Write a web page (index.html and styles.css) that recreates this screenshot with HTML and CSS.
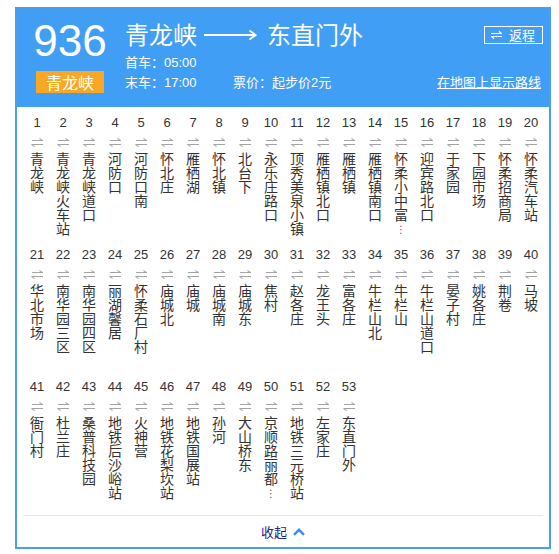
FILE: index.html
```html
<!DOCTYPE html>
<html lang="zh-CN">
<head>
<meta charset="utf-8">
<title>936</title>
<link rel="stylesheet" href="styles.css">
</head>
<body>
<div class="card">
  <div class="head">
    <div class="line-no">
      <div class="num">936</div>
      <div class="badge">青龙峡</div>
    </div>
    <div class="info">
      <div class="top">
        <div class="title">
          <span>青龙峡</span>
          <svg class="long-arrow" width="53" height="12" viewBox="0 0 53 12"><path d="M0 6H51" stroke="#fff" stroke-width="2" fill="none"/><path d="M45.5 1.5L51.5 6L45.5 10.5" stroke="#fff" stroke-width="2" fill="none"/></svg>
          <span>东直门外</span>
        </div>
        <a class="back"><svg width="11" height="8" viewBox="0 0 11 8"><path d="M0 2.5H10.5L8 0.3" stroke="#fff" stroke-width="1.2" fill="none"/><path d="M11 5.5H0.5L3 7.7" stroke="#fff" stroke-width="1.2" fill="none"/></svg><span>返程</span></a>
      </div>
      <div class="time">首车：05:00</div>
      <div class="bottom">
        <span class="time-last">末车：17:00</span>
        <span class="price">票价：起步价2元</span>
        <a class="maplink">在地图上显示路线</a>
      </div>
    </div>
  </div>

  <div class="stations">
    <div class="st"><div class="no">1</div><i class="dir"></i><div class="name">青龙峡</div></div>
    <div class="st"><div class="no">2</div><i class="dir"></i><div class="name">青龙峡火车站</div></div>
    <div class="st"><div class="no">3</div><i class="dir"></i><div class="name">青龙峡道口</div></div>
    <div class="st"><div class="no">4</div><i class="dir"></i><div class="name">河防口</div></div>
    <div class="st"><div class="no">5</div><i class="dir"></i><div class="name">河防口南</div></div>
    <div class="st"><div class="no">6</div><i class="dir"></i><div class="name">怀北庄</div></div>
    <div class="st"><div class="no">7</div><i class="dir"></i><div class="name">雁栖湖</div></div>
    <div class="st"><div class="no">8</div><i class="dir"></i><div class="name">怀北镇</div></div>
    <div class="st"><div class="no">9</div><i class="dir"></i><div class="name">北台下</div></div>
    <div class="st"><div class="no">10</div><i class="dir"></i><div class="name">永乐庄路口</div></div>
    <div class="st"><div class="no">11</div><i class="dir"></i><div class="name">顶秀美泉小镇</div></div>
    <div class="st"><div class="no">12</div><i class="dir"></i><div class="name">雁栖镇北口</div></div>
    <div class="st"><div class="no">13</div><i class="dir"></i><div class="name">雁栖镇</div></div>
    <div class="st"><div class="no">14</div><i class="dir"></i><div class="name">雁栖镇南口</div></div>
    <div class="st"><div class="no">15</div><i class="dir"></i><div class="name">怀柔小中富</div><div class="more">⋮</div></div>
    <div class="st"><div class="no">16</div><i class="dir"></i><div class="name">迎宾路北口</div></div>
    <div class="st"><div class="no">17</div><i class="dir"></i><div class="name">于家园</div></div>
    <div class="st"><div class="no">18</div><i class="dir"></i><div class="name">下园市场</div></div>
    <div class="st"><div class="no">19</div><i class="dir"></i><div class="name">怀柔招商局</div></div>
    <div class="st"><div class="no">20</div><i class="dir"></i><div class="name">怀柔汽车站</div></div>
    <div class="st"><div class="no">21</div><i class="dir"></i><div class="name">华北市场</div></div>
    <div class="st"><div class="no">22</div><i class="dir"></i><div class="name">南华园三区</div></div>
    <div class="st"><div class="no">23</div><i class="dir"></i><div class="name">南华园四区</div></div>
    <div class="st"><div class="no">24</div><i class="dir"></i><div class="name">丽湖馨居</div></div>
    <div class="st"><div class="no">25</div><i class="dir"></i><div class="name">怀柔石厂村</div></div>
    <div class="st"><div class="no">26</div><i class="dir"></i><div class="name">庙城北</div></div>
    <div class="st"><div class="no">27</div><i class="dir"></i><div class="name">庙城</div></div>
    <div class="st"><div class="no">28</div><i class="dir"></i><div class="name">庙城南</div></div>
    <div class="st"><div class="no">29</div><i class="dir"></i><div class="name">庙城东</div></div>
    <div class="st"><div class="no">30</div><i class="dir"></i><div class="name">焦村</div></div>
    <div class="st"><div class="no">31</div><i class="dir"></i><div class="name">赵各庄</div></div>
    <div class="st"><div class="no">32</div><i class="dir"></i><div class="name">龙王头</div></div>
    <div class="st"><div class="no">33</div><i class="dir"></i><div class="name">富各庄</div></div>
    <div class="st"><div class="no">34</div><i class="dir"></i><div class="name">牛栏山北</div></div>
    <div class="st"><div class="no">35</div><i class="dir"></i><div class="name">牛栏山</div></div>
    <div class="st"><div class="no">36</div><i class="dir"></i><div class="name">牛栏山道口</div></div>
    <div class="st"><div class="no">37</div><i class="dir"></i><div class="name">晏子村</div></div>
    <div class="st"><div class="no">38</div><i class="dir"></i><div class="name">姚各庄</div></div>
    <div class="st"><div class="no">39</div><i class="dir"></i><div class="name">荆卷</div></div>
    <div class="st"><div class="no">40</div><i class="dir"></i><div class="name">马坡</div></div>
    <div class="st"><div class="no">41</div><i class="dir"></i><div class="name">衙门村</div></div>
    <div class="st"><div class="no">42</div><i class="dir"></i><div class="name">杜兰庄</div></div>
    <div class="st"><div class="no">43</div><i class="dir"></i><div class="name">桑普科技园</div></div>
    <div class="st"><div class="no">44</div><i class="dir"></i><div class="name">地铁后沙峪站</div></div>
    <div class="st"><div class="no">45</div><i class="dir"></i><div class="name">火神营</div></div>
    <div class="st"><div class="no">46</div><i class="dir"></i><div class="name">地铁花梨坎站</div></div>
    <div class="st"><div class="no">47</div><i class="dir"></i><div class="name">地铁国展站</div></div>
    <div class="st"><div class="no">48</div><i class="dir"></i><div class="name">孙河</div></div>
    <div class="st"><div class="no">49</div><i class="dir"></i><div class="name">大山桥东</div></div>
    <div class="st"><div class="no">50</div><i class="dir"></i><div class="name">京顺路丽都</div><div class="more">⋮</div></div>
    <div class="st"><div class="no">51</div><i class="dir"></i><div class="name">地铁三元桥站</div></div>
    <div class="st"><div class="no">52</div><i class="dir"></i><div class="name">左家庄</div></div>
    <div class="st"><div class="no">53</div><i class="dir"></i><div class="name">东直门外</div></div>
  </div>

  <div class="foot">
    <a class="collapse">收起</a>
    <svg width="12" height="8" viewBox="0 0 12 8"><path d="M1 6.8L6 1.8L11 6.8" stroke="#3b8fe3" stroke-width="2.4" fill="none"/></svg>
  </div>
</div>
</body>
</html>
```

FILE: styles.css
```css
* { box-sizing: border-box; }

body {
  margin: 0;
  background: #fff;
  font-family: "Liberation Sans", "Noto Sans CJK SC", sans-serif;
  color: #333;
}

.card {
  margin: 7px 0 0 15px;
  width: 536px;
  border: 2px solid #4a9fea;
  background: #fff;
}

/* header */
.head {
  height: 98px;
  background: #419ef5;
  color: #fff;
  display: flex;
  padding: 10px 6px 0 16px;
}

.line-no {
  width: 74px;
  display: flex;
  flex-direction: column;
  align-items: center;
}

.num {
  font-size: 44px;
  line-height: 44px;
  font-family: "Liberation Sans", sans-serif;
}

.badge {
  margin-top: 8px;
  width: 68px;
  height: 22px;
  background: #f8a824;
  font-family: "Noto Sans CJK SC", sans-serif;
  font-size: 16px;
  line-height: 22px;
  text-align: center;
}

.info {
  flex: 1;
  margin-left: 18px;
  display: flex;
  flex-direction: column;
  font-size: 13px;
}

.top {
  display: flex;
  justify-content: space-between;
  align-items: flex-start;
}

.title {
  display: flex;
  align-items: center;
  font-family: "Noto Sans CJK SC", sans-serif;
  font-size: 24px;
  line-height: 30px;
}

.long-arrow { margin: 1px 10px 0 7px; }

.back {
  margin-top: 7px;
  height: 18px;
  border: 1px solid #fff;
  padding: 0 7px 0 6px;
  display: flex;
  align-items: center;
  gap: 7px;
  font-family: "Noto Sans CJK SC", sans-serif;
  font-size: 13px;
  line-height: 16px;
  color: #fff;
}

.time {
  margin-top: 4px;
  line-height: 20px;
}

.bottom {
  display: flex;
  line-height: 20px;
}

.time-last { width: 108px; }

.maplink {
  margin-left: auto;
  margin-right: 2px;
  color: #fff;
  text-decoration: underline;
}

/* stations */
.stations {
  display: grid;
  grid-template-columns: repeat(20, 26px);
  grid-auto-rows: 132px;
  padding: 8px 0 4px 7px;
}

.st {
  display: flex;
  flex-direction: column;
  align-items: center;
}

.no {
  font-size: 13px;
  line-height: 16px;
  color: #333;
}

.dir {
  display: block;
  width: 11px;
  height: 7px;
  margin-top: 8px;
  background:
    linear-gradient(#a4a4a4, #a4a4a4) 0 1px / 11px 1px no-repeat,
    linear-gradient(#a4a4a4, #a4a4a4) 0 5px / 11px 1px no-repeat;
  position: relative;
}
.dir::before,
.dir::after {
  content: "";
  position: absolute;
  width: 4px;
  height: 1px;
  background: #a4a4a4;
}
.dir::before { right: -0.5px; top: 0; transform: rotate(35deg); }
.dir::after { left: -0.5px; top: 6px; transform: rotate(35deg); }

.name {
  margin-top: 5px;
  width: 14px;
  font-family: "Noto Sans CJK SC", sans-serif;
  font-size: 14px;
  line-height: 14px;
  word-break: break-all;
  color: #333;
  text-align: center;
}

.more {
  margin-top: 3px;
  font-family: "DejaVu Sans", sans-serif;
  font-size: 10px;
  line-height: 12px;
  color: #555;
}

/* footer */
.foot {
  margin: 0 6px 0 6px;
  height: 32px;
  border-top: 1px solid #e6e6e6;
  display: flex;
  align-items: center;
  justify-content: center;
  gap: 6px;
}

.collapse {
  font-family: "Noto Sans CJK SC", sans-serif;
  font-size: 13px;
  color: #1c2585;
}
```
